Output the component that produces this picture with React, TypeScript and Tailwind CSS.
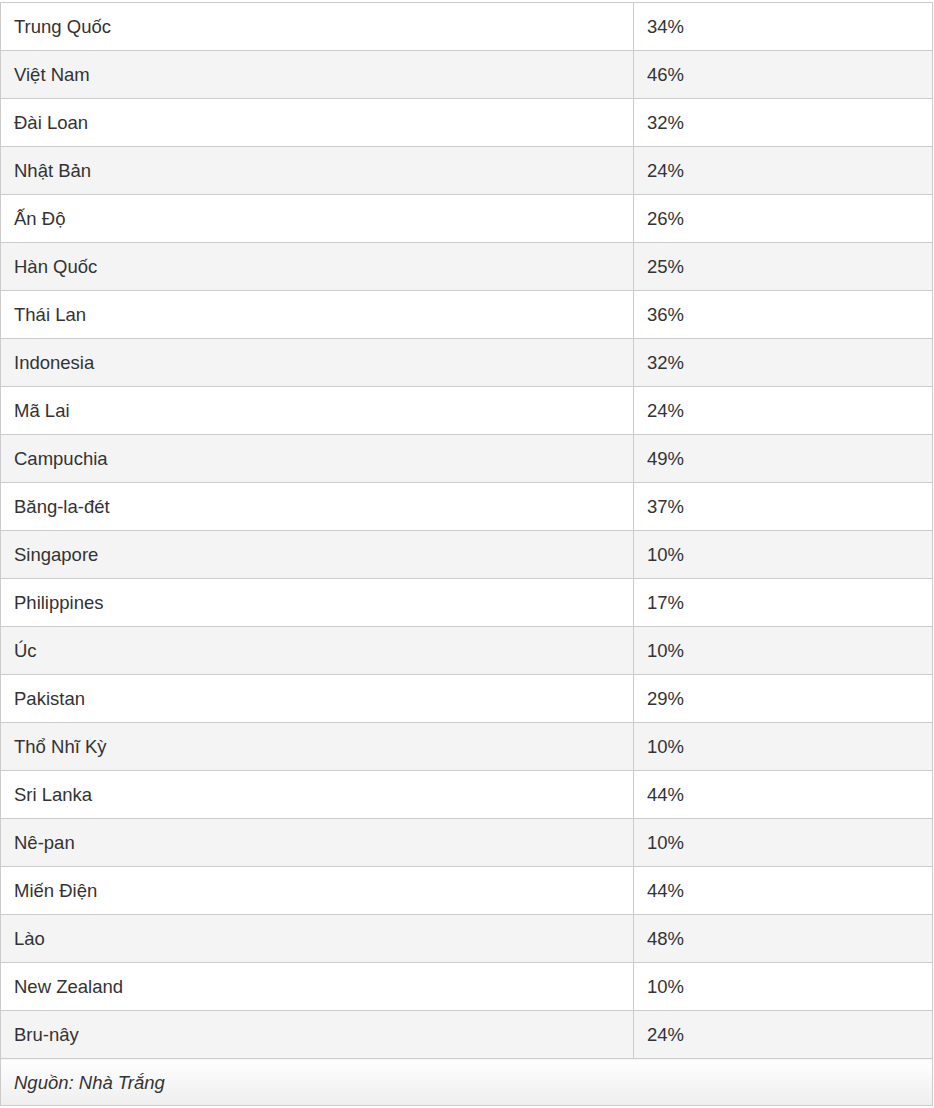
import React from "react";

const rows: [string, string][] = [
  ["Trung Quốc", "34%"],
  ["Việt Nam", "46%"],
  ["Đài Loan", "32%"],
  ["Nhật Bản", "24%"],
  ["Ấn Độ", "26%"],
  ["Hàn Quốc", "25%"],
  ["Thái Lan", "36%"],
  ["Indonesia", "32%"],
  ["Mã Lai", "24%"],
  ["Campuchia", "49%"],
  ["Băng-la-đét", "37%"],
  ["Singapore", "10%"],
  ["Philippines", "17%"],
  ["Úc", "10%"],
  ["Pakistan", "29%"],
  ["Thổ Nhĩ Kỳ", "10%"],
  ["Sri Lanka", "44%"],
  ["Nê-pan", "10%"],
  ["Miến Điện", "44%"],
  ["Lào", "48%"],
  ["New Zealand", "10%"],
  ["Bru-nây", "24%"],
];

export default function App() {
  return (
    <div className="bg-white pt-[2px] font-['Liberation_Sans',Arial,sans-serif] text-[18.5px] text-[#333]">
      <table className="w-[933px] border-collapse">
        <tbody>
          {rows.map(([name, pct], i) => (
            <tr key={name} className={i % 2 === 1 ? "bg-[#f4f4f4]" : "bg-white"}>
              <td className="w-[633px] h-[48px] border border-[#cccccc] px-[13px] leading-[27px]">
                {name}
              </td>
              <td className="h-[48px] border border-[#cccccc] px-[13px] leading-[27px]">{pct}</td>
            </tr>
          ))}
          <tr>
            <td
              colSpan={2}
              className="h-[47px] border border-[#cccccc] px-[13px] italic leading-[27px] bg-gradient-to-b from-white to-[#eeeeee]"
            >
              Nguồn: Nhà Trắng
            </td>
          </tr>
        </tbody>
      </table>
    </div>
  );
}
